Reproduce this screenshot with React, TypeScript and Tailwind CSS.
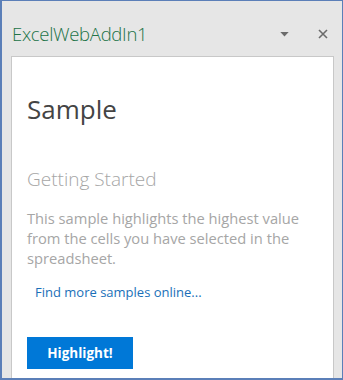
import React from "react";

const App = () => {
  return (
    <div className="w-[343px] h-[380px] bg-[#5b7fb8] p-[1px] pl-[2px] pb-[2px] overflow-hidden">
      <div className="w-full h-full bg-[#e6e6e6] flex flex-col pl-[9px] pr-[8px]" style={{ fontFamily: '"Open Sans", "Noto Sans", sans-serif' }}>
        <div className="h-[55px] flex items-center justify-between pt-[11px] pl-[1px]">
          <h1 className="text-[18.5px] font-light text-[#217346] tracking-[-0.3px]">ExcelWebAddIn1</h1>
          <div className="flex items-center gap-[29px] pr-[6px] text-[#666]">
            <svg width="9" height="5" viewBox="0 0 10 6">
              <path d="M0 0 L10 0 L5 5.5 Z" fill="#6b6b6b" />
            </svg>
            <svg width="10" height="10" viewBox="0 0 10 10">
              <path d="M1 1 L9 9 M9 1 L1 9" stroke="#6b6b6b" strokeWidth="1.6" />
            </svg>
          </div>
        </div>
        <div className="flex-1 bg-white border border-b-0 border-[#c8c8c8] pl-[15px] pr-3">
          <h2 className="mt-[36px] text-[26px] text-[#444] leading-[32px]">Sample</h2>
          <h3 className="mt-[41px] text-[19px] font-light text-[#a6a6a6] leading-[26px]">Getting Started</h3>
          <p className="mt-[16px] text-[14.7px] leading-[20px] text-[#a6a6a6]">
            This sample highlights the highest value from the cells you have selected in the spreadsheet.
          </p>
          <a className="block mt-[15px] ml-[8px] text-[13px] text-[#1a6fb8] leading-[18px]">
            Find more samples online...
          </a>
          <button className="mt-[36px] w-[106px] h-[32px] bg-[#0078d7] text-white text-[13.5px] font-bold">
            Highlight!
          </button>
        </div>
      </div>
    </div>
  );
};

export default App;
